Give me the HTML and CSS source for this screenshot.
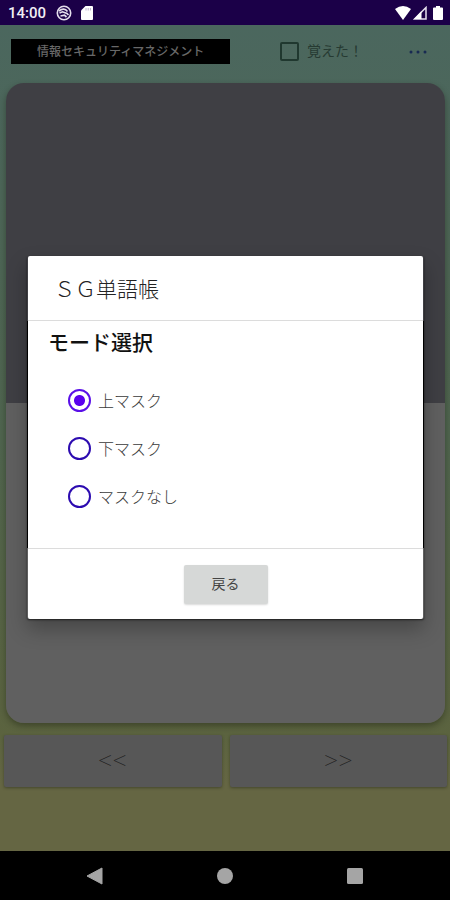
FILE: index.html
```html
<!DOCTYPE html>
<html lang="ja">
<head>
<meta charset="utf-8">
<meta name="viewport" content="width=device-width, initial-scale=1">
<title>SG単語帳</title>
<link rel="stylesheet" href="styles.css">
</head>
<body>
<header class="status">
  <time class="clock">14:00</time>
  <svg class="status-icon" width="16" height="16" viewBox="0 0 16 16" aria-hidden="true">
    <circle cx="8" cy="8" r="6.7" fill="none" stroke="#e4deec" stroke-width="1.6"/>
    <path d="M3 6 Q8 2 11.500 6.500 M3.500 8 L6.500 6.800 L11 8.500 L12.500 10 M4.500 11 L8.500 10.200 L10.500 12" fill="none" stroke="#e4deec" stroke-width="1.7"/>
  </svg>
  <svg class="status-icon" width="12" height="14" viewBox="0 0 12 14" aria-hidden="true">
    <path d="M4.500 0 H11 Q12 0 12 1 V13 Q12 14 11 14 H1 Q0 14 0 13 V4.500 Z" fill="#fff"/>
    <path d="M5 2 V4.500 M7.200 2 V4.500 M9.400 2 V4.500" stroke="#bbb2cc" stroke-width="1"/>
  </svg>
  <div class="signals">
    <svg width="16" height="14" viewBox="0 0 16 14" aria-hidden="true">
      <path d="M0 3 Q8 -3 16 3 L8 14 Z" fill="#fff"/>
    </svg>
    <svg width="14" height="14" viewBox="0 0 14 14" aria-hidden="true">
      <path d="M13 1.500 V13 H1.500 Z" fill="none" stroke="#e6e0ee" stroke-width="1.500"/>
      <path d="M8.500 5 V13 H1 Z" fill="#fff"/>
    </svg>
    <svg class="battery" width="10" height="14" viewBox="0 0 10 14" aria-hidden="true">
      <path d="M3 0 H7 V1.500 H9 Q10 1.500 10 2.500 V13 Q10 14 9 14 H1 Q0 14 0 13 V2.500 Q0 1.500 1 1.500 H3 Z" fill="#fff"/>
    </svg>
  </div>
</header>

<main class="app">
  <div class="toolbar">
    <h1 class="subject">情報セキュリティマネジメント</h1>
    <label class="learned"><input class="check" type="checkbox">覚えた！</label>
    <button class="more" type="button" aria-label="メニュー">
      <svg width="18" height="4" viewBox="0 0 18 4" aria-hidden="true">
        <g fill="#182a52"><circle cx="2" cy="2" r="1.500"/><circle cx="9" cy="2" r="1.500"/><circle cx="16" cy="2" r="1.500"/></g>
      </svg>
    </button>
  </div>
  <section class="card">
    <div class="mask"></div>
    <div class="answer"></div>
  </section>
  <div class="pager">
    <button class="page-button" type="button">&lt;&lt;</button>
    <button class="page-button" type="button">&gt;&gt;</button>
  </div>

  <div class="overlay">
    <form class="dialog" role="dialog" aria-labelledby="dialog-title">
      <h2 class="dialog-title" id="dialog-title">ＳＧ単語帳</h2>
      <fieldset class="modes">
        <legend class="modes-title">モード選択</legend>
        <label class="mode"><input class="radio" type="radio" name="mode" checked>上マスク</label>
        <label class="mode"><input class="radio" type="radio" name="mode">下マスク</label>
        <label class="mode"><input class="radio" type="radio" name="mode">マスクなし</label>
      </fieldset>
      <div class="dialog-footer">
        <button class="back" type="button">戻る</button>
      </div>
    </form>
  </div>
</main>

<nav class="system-nav">
  <button class="nav-button" type="button" aria-label="戻る">
    <svg width="18" height="18" viewBox="0 0 18 18" aria-hidden="true"><path d="M16 1 V17 L1 9 Z" fill="#a5a5a5" stroke="#a5a5a5" stroke-linejoin="round"/></svg>
  </button>
  <button class="nav-button" type="button" aria-label="ホーム">
    <svg width="18" height="18" viewBox="0 0 18 18" aria-hidden="true"><circle cx="9" cy="9" r="8" fill="#a5a5a5"/></svg>
  </button>
  <button class="nav-button" type="button" aria-label="履歴">
    <svg width="18" height="18" viewBox="0 0 18 18" aria-hidden="true"><rect x="1" y="1" width="16" height="16" rx="1.500" fill="#a5a5a5"/></svg>
  </button>
</nav>
</body>
</html>
```
FILE: styles.css
```css
* {
  box-sizing: border-box;
}

body {
  margin: 0;
  min-height: 100vh;
  display: flex;
  flex-direction: column;
  font-family: Roboto, "Noto Sans CJK JP", sans-serif;
  background: #000;
}

button {
  font-family: inherit;
  border: 0;
  padding: 0;
}

svg {
  display: block;
}

.status {
  display: flex;
  align-items: center;
  height: 25px;
  padding: 1px 7px 0 8px;
  background: #1b0048;
  color: #f2eff6;
}

.clock {
  font-size: 15px;
  font-weight: 500;
  line-height: 20px;
  margin-right: 1px;
}

.status-icon {
  margin-left: 9px;
}

.signals {
  display: flex;
  gap: 2px;
  margin-left: auto;
}

.battery {
  margin-left: 4px;
}

.app {
  position: relative;
  flex: 1;
  display: flex;
  flex-direction: column;
  padding: 0 5px 64px;
  background: linear-gradient(#4b675e, #50654f 50%, #5b633f 86%, #656643 92%);
}

.toolbar {
  display: flex;
  align-items: center;
  height: 58px;
  padding: 0 12px 6px 6px;
}

.subject {
  flex: 0 0 52%;
  margin: 0;
  padding-top: 1px;
  background: #000;
  color: #686868;
  font-size: 12px;
  font-weight: 500;
  line-height: 24px;
  text-align: center;
  white-space: nowrap;
}

.learned {
  display: flex;
  align-items: center;
  gap: 8px;
  margin-left: auto;
  color: #263a32;
  font-size: 14px;
  line-height: 20px;
  white-space: nowrap;
}

.check {
  appearance: none;
  width: 19px;
  height: 19px;
  margin: 0;
  border: 2px solid #20382f;
  border-radius: 2px;
}

.more {
  margin-left: 40px;
  padding: 8px 6px 6px;
  background: none;
}

.card {
  flex: 1;
  display: flex;
  flex-direction: column;
  margin: 0 0 0 1px;
  border-radius: 18px;
  overflow: hidden;
  box-shadow: 0 3px 6px rgba(20, 24, 10, 0.4);
}

.mask {
  flex: 1;
  background: #3f3f44;
}

.answer {
  flex: 1;
  background: #606060;
}

.pager {
  display: grid;
  grid-template-columns: 1fr 1fr;
  gap: 8px;
  margin: 12px -2px 0 -1px;
}

.page-button {
  height: 52px;
  border-radius: 2px;
  background: #575757;
  color: #202020;
  font-size: 28px;
  font-weight: 100;
  line-height: 28px;
  box-shadow: 0 1px 3px rgba(20, 24, 10, 0.4);
}

.overlay {
  position: absolute;
  inset: 0;
  display: grid;
  align-items: center;
  padding: 0 26px 2px 27px;
}

.dialog {
  border-radius: 2px;
  box-shadow: 0 1px 2px rgba(0, 0, 0, 0.6), 0 10px 20px rgba(0, 0, 0, 0.28);
}

.dialog-title {
  margin: 0 1px;
  padding: 20px 26px 16px;
  border-bottom: 1px solid #dcdcdc;
  border-radius: 2px 2px 0 0;
  background: #fff;
  color: #222;
  font-size: 21px;
  font-weight: 300;
  line-height: 28px;
}

.modes {
  min-width: 0;
  margin: 0;
  padding: 0 20px 27px;
  border: 0;
  border-left: 1px solid #000;
  border-right: 1px solid #000;
  background: #fff;
}

.modes-title {
  float: left;
  width: 100%;
  margin-bottom: 12px;
  padding: 6px 0;
  color: #111;
  font-size: 21px;
  font-weight: 500;
  line-height: 32px;
}

.mode {
  clear: both;
  display: flex;
  align-items: center;
  gap: 7px;
  height: 48px;
  padding: 0 0 2px 20px;
  color: #3a3a3a;
  font-size: 16px;
  font-weight: 300;
}

.radio {
  appearance: none;
  width: 23px;
  height: 23px;
  margin: 2px 0 0;
  border: 2px solid #2c0bb0;
  border-radius: 50%;
}

.radio:checked {
  border-color: #5a10e8;
  background: radial-gradient(circle, #5a00ee 5px, transparent 6px);
}

.dialog-footer {
  display: flex;
  justify-content: center;
  margin: 0 1px;
  padding: 16px 0 15px;
  border-top: 1px solid #dcdcdc;
  border-radius: 0 0 2px 2px;
  background: #fff;
}

.back {
  width: 84px;
  height: 39px;
  border-radius: 2px;
  background: #d6d8d7;
  color: #444;
  font-size: 14px;
  line-height: 20px;
  box-shadow: 0 1px 2px rgba(0, 0, 0, 0.15);
}

.system-nav {
  display: flex;
  justify-content: center;
  gap: 112px;
  height: 49px;
  background: #000;
}

.nav-button {
  display: flex;
  align-items: center;
  background: none;
}
```
